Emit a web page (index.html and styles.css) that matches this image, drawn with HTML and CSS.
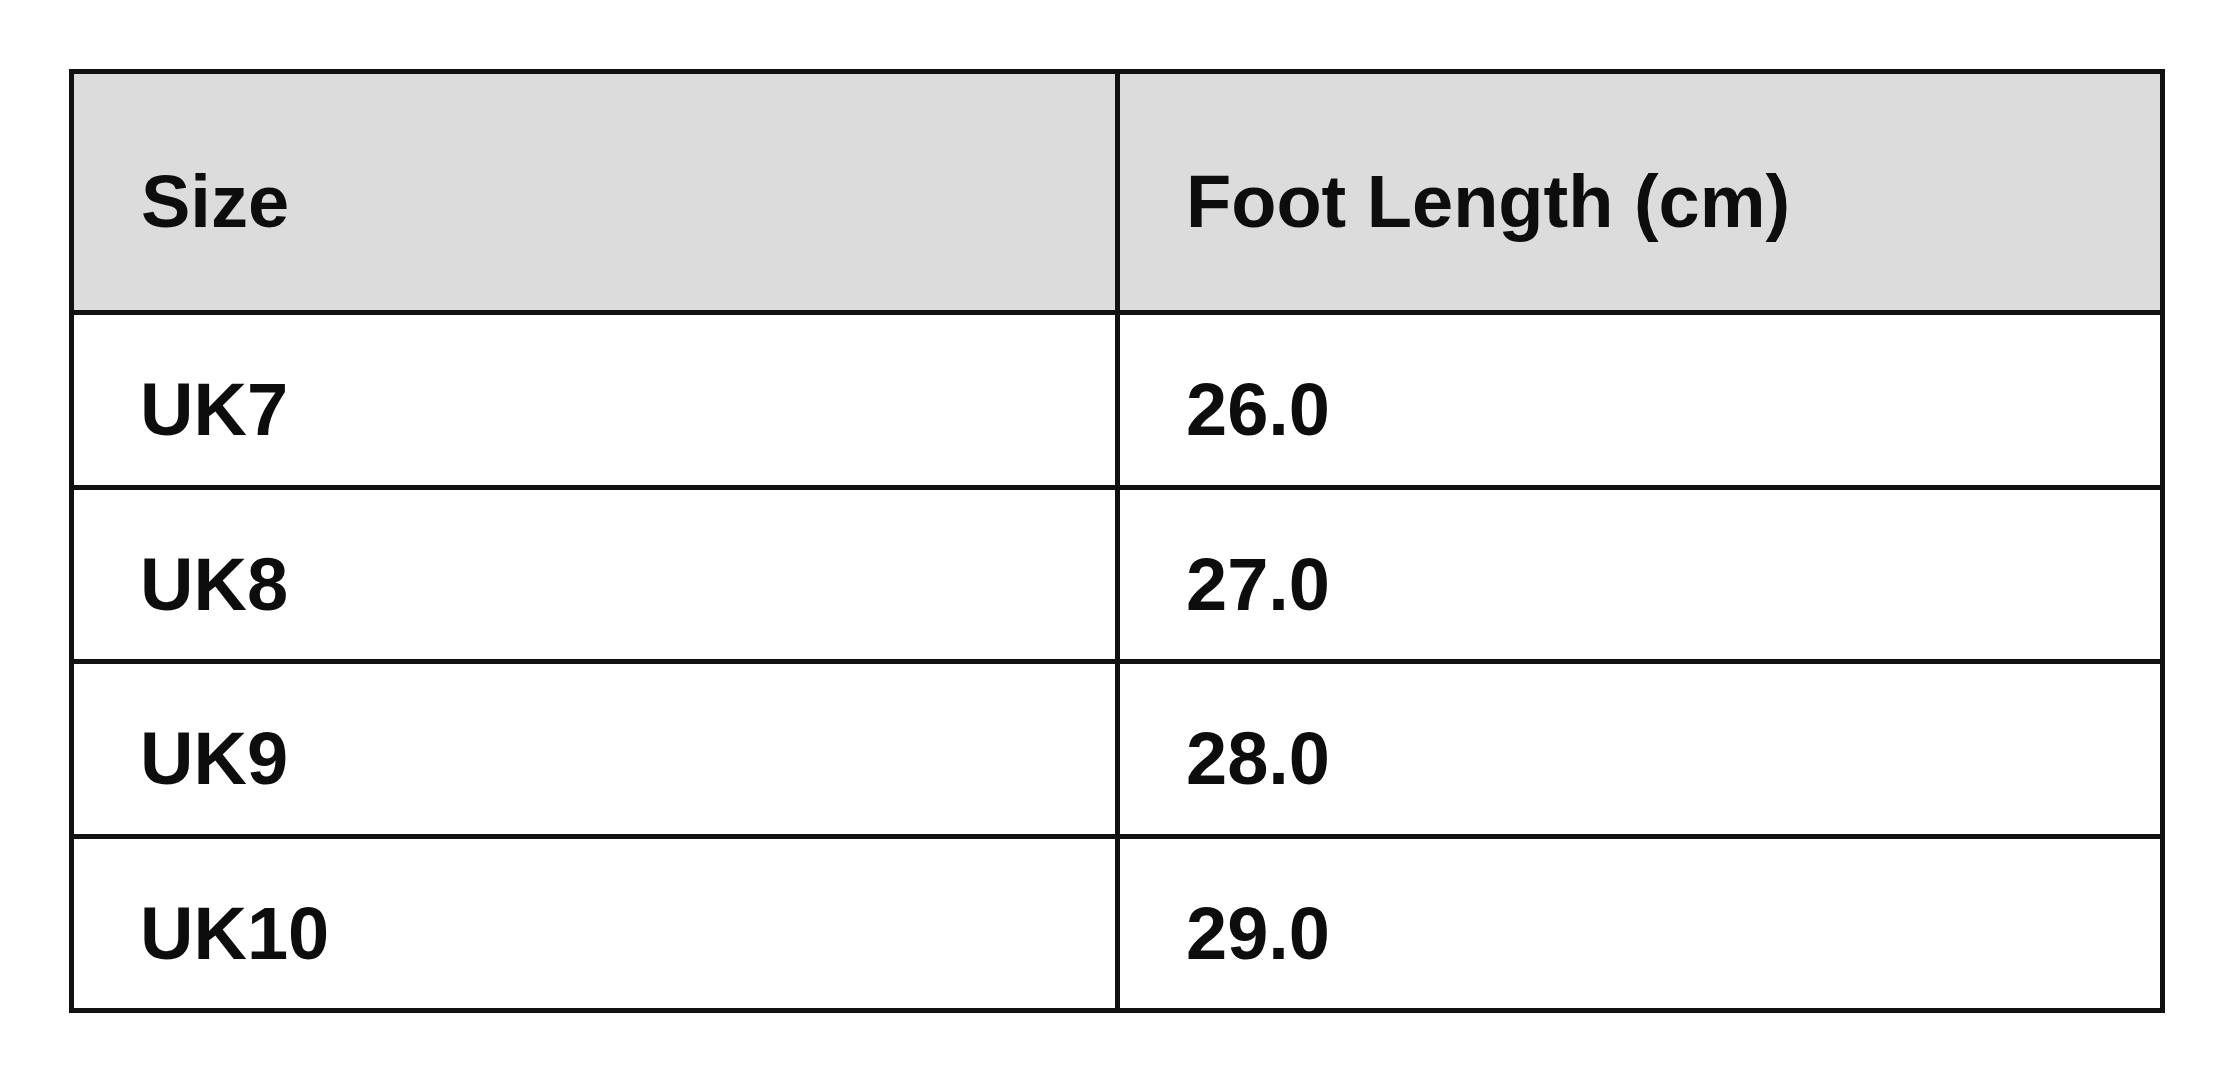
FILE: index.html
```html
<!DOCTYPE html>
<html lang="en">
<head>
<meta charset="utf-8">
<title>Size Chart</title>
<link rel="stylesheet" href="styles.css">
</head>
<body>
<div class="size-table" role="table">
  <div class="cell head" role="columnheader">Size</div>
  <div class="cell head last-col" role="columnheader">Foot Length (cm)</div>
  <div class="cell" role="cell">UK7</div>
  <div class="cell last-col" role="cell">26.0</div>
  <div class="cell" role="cell">UK8</div>
  <div class="cell last-col" role="cell">27.0</div>
  <div class="cell" role="cell">UK9</div>
  <div class="cell last-col" role="cell">28.0</div>
  <div class="cell last-row" role="cell">UK10</div>
  <div class="cell last-col last-row" role="cell">29.0</div>
</div>
</body>
</html>
```

FILE: styles.css
```css
html, body {
  margin: 0;
  padding: 0;
  background: #ffffff;
}

body {
  padding: 69px 0 0 69px;
  font-family: "Liberation Sans", Arial, sans-serif;
  color: #0d0d0d;
}

.size-table {
  width: 2096px;
  box-sizing: border-box;
  border: 5px solid #111;
  display: grid;
  grid-template-columns: 1046px 1040px;
  grid-template-rows: 241px 175px 174px 175px 169px;
}

.cell {
  display: flex;
  align-items: center;
  box-sizing: border-box;
  padding: 20px 0 0 66px;
  font-size: 74px;
  line-height: 74px;
  font-weight: bold;
  border-right: 5px solid #111;
  border-bottom: 5px solid #111;
  background: #fff;
}

.head {
  background: #dcdcdc;
  padding-left: 67px;
}

.last-col {
  border-right: none;
  padding-left: 66px;
}

.last-row {
  border-bottom: none;
}
```
